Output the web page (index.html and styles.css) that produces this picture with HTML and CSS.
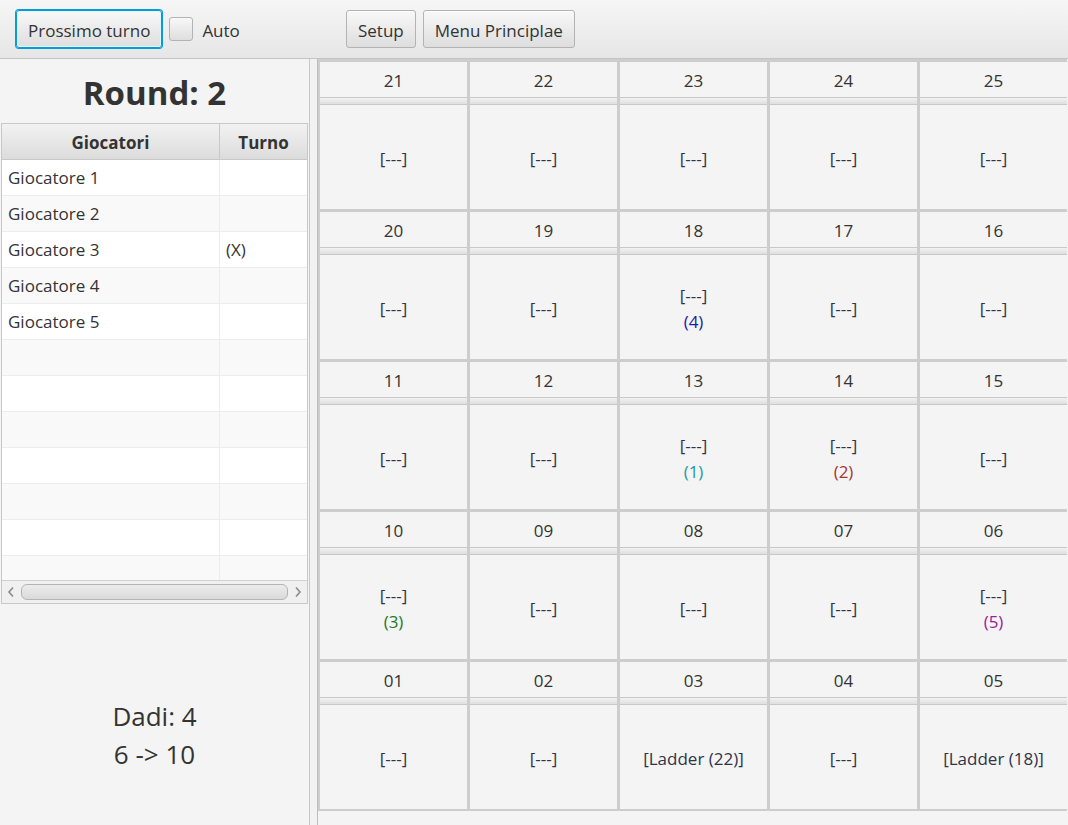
FILE: index.html
```html
<!DOCTYPE html>
<html lang="it">
<head>
<meta charset="utf-8">
<title>Gioco</title>
<link rel="stylesheet" href="styles.css">
</head>
<body>
<div class="app">
  <div class="toolbar">
    <div class="tb-group">
      <button class="btn btn-focused">Prossimo turno</button>
      <label class="check"><span class="box"></span><span class="check-label">Auto</span></label>
    </div>
    <button class="btn">Setup</button>
    <button class="btn">Menu Principlae</button>
  </div>
  <div class="main">
    <div class="left">
      <div class="round">Round: 2</div>
      <div class="table">
        <div class="thead">
          <div class="th c1">Giocatori</div>
          <div class="th c2">Turno</div>
        </div>
        <div class="tbody">
          <div class="tr"><div class="td c1">Giocatore 1</div><div class="td c2"></div></div>
          <div class="tr odd"><div class="td c1">Giocatore 2</div><div class="td c2"></div></div>
          <div class="tr"><div class="td c1">Giocatore 3</div><div class="td c2">(X)</div></div>
          <div class="tr odd"><div class="td c1">Giocatore 4</div><div class="td c2"></div></div>
          <div class="tr"><div class="td c1">Giocatore 5</div><div class="td c2"></div></div>
          <div class="tr odd"><div class="td c1"></div><div class="td c2"></div></div>
          <div class="tr"><div class="td c1"></div><div class="td c2"></div></div>
          <div class="tr odd"><div class="td c1"></div><div class="td c2"></div></div>
          <div class="tr"><div class="td c1"></div><div class="td c2"></div></div>
          <div class="tr odd"><div class="td c1"></div><div class="td c2"></div></div>
          <div class="tr"><div class="td c1"></div><div class="td c2"></div></div>
          <div class="tr odd"><div class="td c1"></div><div class="td c2"></div></div>
        </div>
        <div class="hscroll">
          <svg class="arrow" width="10" height="12" viewBox="0 0 10 12"><path d="M7 1.5 L3 6 L7 10.5" fill="none" stroke="#8a8a8a" stroke-width="1.6"/></svg>
          <div class="thumb"></div>
          <svg class="arrow" width="10" height="12" viewBox="0 0 10 12"><path d="M3 1.5 L7 6 L3 10.5" fill="none" stroke="#8a8a8a" stroke-width="1.6"/></svg>
        </div>
      </div>
      <div class="dice">
        <div class="dice-line">Dadi: 4</div>
        <div class="dice-line">6 -&gt; 10</div>
      </div>
    </div>
    <div class="divider"></div>
    <div class="board">
      <div class="grid">
        <div class="cell"><div class="cell-head">21</div><div class="band"></div><div class="cell-body">[---]</div></div>
        <div class="cell"><div class="cell-head">22</div><div class="band"></div><div class="cell-body">[---]</div></div>
        <div class="cell"><div class="cell-head">23</div><div class="band"></div><div class="cell-body">[---]</div></div>
        <div class="cell"><div class="cell-head">24</div><div class="band"></div><div class="cell-body">[---]</div></div>
        <div class="cell"><div class="cell-head">25</div><div class="band"></div><div class="cell-body">[---]</div></div>

        <div class="cell"><div class="cell-head">20</div><div class="band"></div><div class="cell-body">[---]</div></div>
        <div class="cell"><div class="cell-head">19</div><div class="band"></div><div class="cell-body">[---]</div></div>
        <div class="cell"><div class="cell-head">18</div><div class="band"></div><div class="cell-body"><span>[---]</span><span class="p4">(4)</span></div></div>
        <div class="cell"><div class="cell-head">17</div><div class="band"></div><div class="cell-body">[---]</div></div>
        <div class="cell"><div class="cell-head">16</div><div class="band"></div><div class="cell-body">[---]</div></div>

        <div class="cell"><div class="cell-head">11</div><div class="band"></div><div class="cell-body">[---]</div></div>
        <div class="cell"><div class="cell-head">12</div><div class="band"></div><div class="cell-body">[---]</div></div>
        <div class="cell"><div class="cell-head">13</div><div class="band"></div><div class="cell-body"><span>[---]</span><span class="p1">(1)</span></div></div>
        <div class="cell"><div class="cell-head">14</div><div class="band"></div><div class="cell-body"><span>[---]</span><span class="p2">(2)</span></div></div>
        <div class="cell"><div class="cell-head">15</div><div class="band"></div><div class="cell-body">[---]</div></div>

        <div class="cell"><div class="cell-head">10</div><div class="band"></div><div class="cell-body"><span>[---]</span><span class="p3">(3)</span></div></div>
        <div class="cell"><div class="cell-head">09</div><div class="band"></div><div class="cell-body">[---]</div></div>
        <div class="cell"><div class="cell-head">08</div><div class="band"></div><div class="cell-body">[---]</div></div>
        <div class="cell"><div class="cell-head">07</div><div class="band"></div><div class="cell-body">[---]</div></div>
        <div class="cell"><div class="cell-head">06</div><div class="band"></div><div class="cell-body"><span>[---]</span><span class="p5">(5)</span></div></div>

        <div class="cell"><div class="cell-head">01</div><div class="band"></div><div class="cell-body">[---]</div></div>
        <div class="cell"><div class="cell-head">02</div><div class="band"></div><div class="cell-body">[---]</div></div>
        <div class="cell"><div class="cell-head">03</div><div class="band"></div><div class="cell-body">[Ladder (22)]</div></div>
        <div class="cell"><div class="cell-head">04</div><div class="band"></div><div class="cell-body">[---]</div></div>
        <div class="cell"><div class="cell-head">05</div><div class="band"></div><div class="cell-body">[Ladder (18)]</div></div>
      </div>
    </div>
  </div>
</div>
</body>
</html>
```

FILE: styles.css
```css
html, body {
  margin: 0;
  padding: 0;
  background: #f4f4f4;
}
body {
  font-family: "Open Sans", "Noto Sans", sans-serif;
  font-size: 17px;
  color: #333333;
}
.app {
  width: 1068px;
  height: 825px;
  overflow: hidden;
  display: flex;
  flex-direction: column;
}

/* toolbar */
.toolbar {
  height: 59px;
  flex: none;
  display: flex;
  align-items: center;
  padding-left: 16px;
  gap: 7px;
  background: linear-gradient(#f6f6f6, #e6e6e6);
  border-bottom: 1px solid #c4c4c4;
  box-sizing: border-box;
}
.tb-group {
  width: 323px;
  display: flex;
  align-items: center;
}
.btn {
  height: 38px;
  padding: 2px 11px 0 11px;
  font-family: inherit;
  font-size: 17px;
  color: #333;
  background: linear-gradient(#f8f8f8, #dedede);
  border: 1px solid #b3b3b3;
  border-radius: 3px;
  box-shadow: inset 0 1px 0 #ffffff;
}
.btn-focused {
  border-color: #039ed3;
  box-shadow: 0 0 0 1px #039ed3, inset 0 0 0 1px #e6f5fb;
}
.check {
  display: flex;
  align-items: center;
  margin-left: 7px;
}
.box {
  width: 22px;
  height: 22px;
  border: 1px solid #b3b3b3;
  border-radius: 3px;
  background: linear-gradient(#f8f8f8, #dedede);
}
.check-label {
  margin-left: 9px;
  padding-top: 2px;
}

/* main */
.main {
  flex: 1;
  display: flex;
  min-height: 0;
}
.left {
  width: 309px;
  flex: none;
  border-right: 1px solid #c8c8c8;
  display: flex;
  flex-direction: column;
  background: #f4f4f4;
}
.round {
  height: 64px;
  display: flex;
  align-items: center;
  justify-content: center;
  font-size: 33px;
  font-weight: 700;
  color: #333;
  padding-top: 3px;
  box-sizing: border-box;
}
.table {
  margin: 0 1px 0 1px;
  border: 1px solid #c8c8c8;
  background: #ffffff;
  display: flex;
  flex-direction: column;
}
.thead {
  display: flex;
  height: 36px;
  background: linear-gradient(#f2f2f2, #dcdcdc);
  border-bottom: 1px solid #c8c8c8;
  box-sizing: border-box;
}
.th {
  display: flex;
  align-items: center;
  justify-content: center;
  font-weight: 700;
  border-right: 1px solid #c8c8c8;
  box-sizing: border-box;
  padding-top: 1px;
}
.th.c2 { border-right: none; }
.c1 { width: 218px; flex: none; }
.c2 { flex: 1; }
.tbody {
  height: 420px;
  overflow: hidden;
}
.tr {
  display: flex;
  height: 36px;
  border-bottom: 1px solid #ececec;
  box-sizing: border-box;
  background: #ffffff;
}
.tr.odd { background: #f9f9f9; }
.td {
  display: flex;
  align-items: center;
  padding-left: 6px;
  box-sizing: border-box;
}
.td.c1 { border-right: 1px solid #ececec; }
.hscroll {
  height: 22px;
  border-top: 1px solid #d0d0d0;
  background: #f0f0f0;
  display: flex;
  align-items: center;
  padding: 0 4px;
  gap: 5px;
}
.arrow { flex: none; }
.thumb {
  flex: 1;
  height: 14px;
  border: 1px solid #b4b4b4;
  border-radius: 6px;
  background: linear-gradient(#ececec, #dadada);
}
.dice {
  flex: 1;
  display: flex;
  flex-direction: column;
  align-items: center;
  padding-top: 93px;
  font-size: 26px;
  line-height: 38px;
}

.divider {
  width: 7px;
  flex: none;
  background: #f2f2f2;
  border-right: 1px solid #bdbdbd;
}

/* board */
.board {
  flex: 1;
  overflow: hidden;
  background: #f4f4f4;
}
.grid {
  display: grid;
  grid-template-columns: repeat(5, 147px);
  grid-auto-rows: 147px;
  gap: 3px;
  padding: 3px 0 2px 2px;
  background: #cdcdcd;
  width: max-content;
}
.cell {
  background: #f4f4f4;
  display: flex;
  flex-direction: column;
}
.cell-head {
  height: 35px;
  flex: none;
  display: flex;
  align-items: center;
  justify-content: center;
  padding-top: 2px;
  box-sizing: border-box;
}
.band {
  height: 8px;
  flex: none;
  border-top: 1px solid #c8c8c8;
  border-bottom: 1px solid #c8c8c8;
  background: linear-gradient(#f2f2f2, #dfdfdf);
  box-sizing: border-box;
}
.cell-body {
  flex: 1;
  display: flex;
  flex-direction: column;
  align-items: center;
  justify-content: center;
  line-height: 26px;
  padding-top: 3px;
  color: #30334a;
}
.p4 { color: #1c1ca6; }
.p1 { color: #1a9aaa; }
.p2 { color: #a83434; }
.p3 { color: #237a23; }
.p5 { color: #9a209a; }
```
